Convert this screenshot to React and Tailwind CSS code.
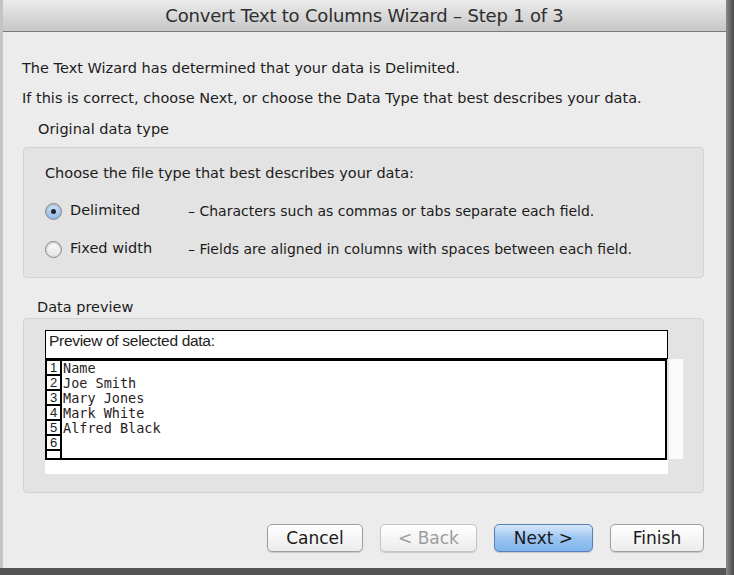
import React from 'react';

const SANS = { fontFamily: '"DejaVu Sans", "Open Sans", sans-serif' };

function Radio({ checked }) {
  return (
    <span
      className={`w-[17px] h-[17px] shrink-0 rounded-full border border-[#8a8a8a] flex items-center justify-center shadow-[inset_0_1px_2px_rgba(0,0,0,0.25)] ${
        checked ? 'bg-gradient-to-b from-[#d3e6f9] to-[#8fb8e6]' : 'bg-gradient-to-b from-[#fdfdfd] to-[#e2e2e2]'
      }`}
    >
      {checked && <span className="w-[5px] h-[5px] rounded-full bg-[#1f2530]" />}
    </span>
  );
}

function Button({ children, primary, disabled, w }) {
  return (
    <button
      className={`h-[28px] rounded-[5px] border text-[17px] leading-none flex items-center justify-center shadow-[0_1px_1px_rgba(0,0,0,0.15)] ${w} ${
        primary
          ? 'border-[#5a7fb8] bg-gradient-to-b from-[#d6e8fb] via-[#9cc5f0] to-[#7fb4ec] text-[#1a1a1a]'
          : 'bg-gradient-to-b from-[#ffffff] to-[#ececec] ' + (disabled ? 'text-[#9c9c9c] border-[#c4c4c4]' : 'text-[#1a1a1a] border-[#9e9e9e]')
      }`}
    >
      {children}
    </button>
  );
}

const ROWS = ['Name', 'Joe Smith', 'Mary Jones', 'Mark White', 'Alfred Black', ''];

export default function App() {
  return (
    <div className="w-[734px] h-[575px] bg-[#555] flex overflow-hidden" style={SANS}>
      <div className="w-[726px] h-[568px] bg-[#ececec] border-l-[3px] border-[#c4c4c4] flex flex-col">
        {/* title bar */}
        <div className="h-[32px] shrink-0 bg-gradient-to-b from-[#ececec] to-[#c6c6c6] border-b border-[#7a7a7a] flex items-center justify-center">
          <span className="text-[18px] text-[#2e2e2e] tracking-[-0.2px]">Convert Text to Columns Wizard – Step 1 of 3</span>
        </div>

        <div className="pl-[19px] pr-[22px] text-[14.5px] text-[#1c1c1c]">
          <p className="mt-[27px] leading-[18px]">The Text Wizard has determined that your data is Delimited.</p>
          <p className="mt-[12px] leading-[18px]">If this is correct, choose Next, or choose the Data Type that best describes your data.</p>

          <div className="mt-[13px] pl-[16px] leading-[18px]">Original data type</div>
          <div className="mt-[9px] ml-[1px] h-[131px] rounded-[4px] border border-[#d2d2d2] bg-[#e3e3e3] pl-[21px] pt-[16px]">
            <div className="leading-[18px]">Choose the file type that best describes your data:</div>
            <div className="mt-[20px] flex items-center h-[18px]">
              <Radio checked />
              <span className="ml-[8px] w-[118px] shrink-0">Delimited</span>
              <span className="text-[14px]">– Characters such as commas or tabs separate each field.</span>
            </div>
            <div className="mt-[20px] flex items-center h-[18px]">
              <Radio />
              <span className="ml-[8px] w-[118px] shrink-0">Fixed width</span>
              <span className="text-[14px]">– Fields are aligned in columns with spaces between each field.</span>
            </div>
          </div>

          <div className="mt-[20px] pl-[15px] leading-[18px]">Data preview</div>
          <div className="mt-[2px] ml-[1px] h-[175px] rounded-[4px] border border-[#d2d2d2] bg-[#e3e3e3] pl-[21px] pt-[11px]">
            <div
              className="w-[623px] h-[29px] bg-white border-[1.5px] border-black px-[3px] text-[15.5px] leading-[20px] text-[#222]"
              style={{ fontFamily: '"Liberation Sans", Arial, sans-serif', letterSpacing: '-0.3px' }}
            >
              Preview of selected data:
            </div>
            <div className="flex">
              <div className="flex flex-col">
                <div className="w-[622px] h-[101px] bg-white border-2 border-black flex flex-col overflow-hidden">
                  {ROWS.map((r, i) => (
                    <div key={i} className="flex h-[15px] shrink-0">
                      <div
                        className="w-[15px] shrink-0 border-r-2 border-b-2 border-black text-[13px] leading-[13px] text-center text-[#222]"
                        style={{ fontFamily: '"Liberation Sans", Arial, sans-serif' }}
                      >
                        {i + 1}
                      </div>
                      <div
                        className="pl-[1px] text-[13.5px] leading-[15px] text-[#2a2222] whitespace-pre"
                        style={{ fontFamily: '"DejaVu Sans Mono", "Liberation Mono", monospace' }}
                      >
                        {r}
                      </div>
                    </div>
                  ))}
                  <div className="w-[15px] flex-1 border-r-2 border-black" />
                </div>
                <div className="w-[623px] h-[14px] bg-white" />
              </div>
              <div className="w-[14px] h-[100px] bg-[#fafafa] ml-[1px]" />
            </div>
          </div>

          <div className="mt-[31px] flex justify-end">
            <Button w="w-[96px]">Cancel</Button>
            <Button w="w-[97px] ml-[17px]" disabled>&lt; Back</Button>
            <Button w="w-[99px] ml-[17px]" primary>Next &gt;</Button>
            <Button w="w-[94px] ml-[17px]">Finish</Button>
          </div>
        </div>
      </div>
      <div className="flex-1 bg-gradient-to-r from-[#8a8a8a] to-[#4a4a4a]" />
    </div>
  );
}
